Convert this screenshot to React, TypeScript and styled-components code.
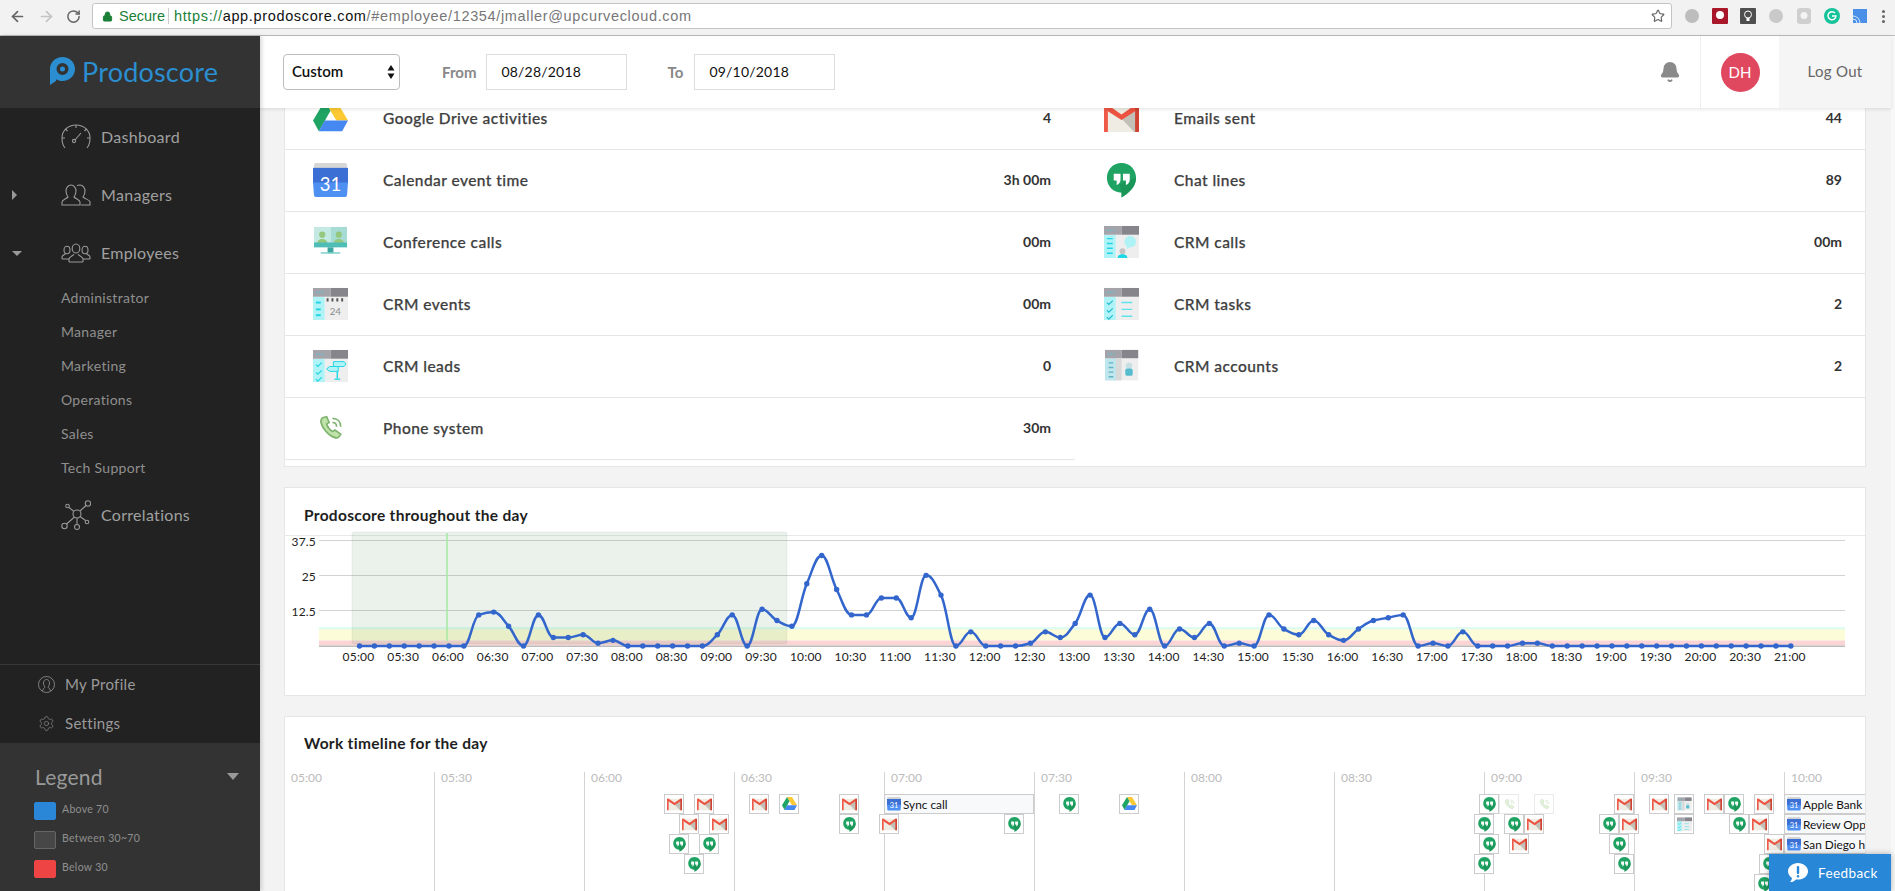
import React from 'react';
import styled, {createGlobalStyle} from 'styled-components';
import {ArrowLeft, ArrowRight, RotateCw, Lock, Star, Bell, Settings} from 'lucide-react';

const GlobalStyle = createGlobalStyle`
  html, body {
    margin: 0;
    height: 100%;
    overflow: hidden;
    background: #f3f3f3;
    font-family: Lato, "Noto Sans", sans-serif;
  }
  * { box-sizing: border-box; }
  #root { height: 100%; }
`;

type IconKind = 'drive' | 'gmail' | 'calendar' | 'chat' | 'conference' | 'events' | 'leads' | 'phone' | 'calls' | 'tasks' | 'accounts';

const CrmFrame = ({accent = '#b0f3f6', children}: {accent?: string, children?: React.ReactNode}) => (
    <>
        <rect x="0" y="10" width="36" height="24" fill="#eeeeee"/>
        <rect x="0" y="10" width="12" height="24" fill={accent}/>
        <rect x="0" y="1" width="18" height="9" fill="#a3a3a9"/>
        <rect x="18" y="1" width="18" height="9" fill="#85858b"/>
        <circle cx="4" cy="5.5" r=".8" fill="#55c8e0"/>
        <circle cx="7" cy="5.5" r=".8" fill="#55c8e0"/>
        <circle cx="10" cy="5.5" r=".8" fill="#55c8e0"/>
        {children}
    </>
);

const Glyph = ({kind, size = 35}: {kind: IconKind, size?: number}) => (
    <svg width={size} height={size} viewBox="0 0 36 36">
        {kind === 'drive' && <>
            <polygon points="12,0 24,0 36,20 24,20" fill="#fbc933"/>
            <polygon points="12,0 0,20 6,31 18,10" fill="#1fa463"/>
            <polygon points="6,31 30,31 36,20 12,20" fill="#4688f1"/>
        </>}
        {kind === 'gmail' && <>
            <rect x="0" y="4" width="36" height="28" rx="1" fill="#efece3"/>
            <polygon points="18,18 36,8 36,32 31,32" fill="#c3c1b7"/>
            <polygon points="0,4 4,4 18,14 32,4 36,4 36,8 18,19.500 0,8" fill="#ec5340"/>
            <rect x="0" y="4" width="4" height="28" rx="1" fill="#ef5a48"/>
            <rect x="32" y="4" width="4" height="28" rx="1" fill="#cf4332"/>
        </>}
        {kind === 'calendar' && <>
            <rect x="1" y="0" width="34" height="7" rx="2" fill="#d6d6d6"/>
            <rect x="0" y="5" width="36" height="16" fill="#3b6fd3"/>
            <path d="M0 20h36l-1 13a2 2 0 0 1-2 2H3a2 2 0 0 1-2-2z" fill="#4e8ff2"/>
            <text x="18" y="29" textAnchor="middle" fontFamily="Lato, sans-serif" fontSize="19" fill="#fff">31</text>
        </>}
        {kind === 'chat' && <>
            <path d="M18 0C9 0 3 7 3 15.5 3 24 10 30.500 18 30.500V35.500C26 31 33 24 33 15.500 33 7 27 0 18 0z" fill="#1ea362"/>
            <path d="M18 30.500V35.500C26 31 33 24 33 15.500L25 18 16 22z" fill="#178d54" opacity=".6"/>
            <path d="M10 11h7v6c0 3-1.500 5-4 5.500v-4.500h-3zM19.500 11h7v6c0 3-1.500 5-4 5.500v-4.500h-3z" fill="#fff"/>
        </>}
        {kind === 'conference' && <>
            <rect x="1" y="2" width="17" height="20" fill="#c4e9e2"/>
            <rect x="18" y="2" width="17" height="20" fill="#a6dcd3"/>
            <circle cx="9.500" cy="10" r="3.200" fill="#95c77e"/>
            <path d="M4 20c0-4 3-5.500 5.500-5.500s5.500 1.500 5.500 5.500z" fill="#95c77e"/>
            <circle cx="26.500" cy="10" r="3.200" fill="#95c77e"/>
            <path d="M21 20c0-4 3-5.500 5.500-5.500S32 16 32 20z" fill="#95c77e"/>
            <rect x="1" y="18" width="34" height="5" fill="#4dbdb6"/>
            <rect x="15" y="23" width="6" height="6" fill="#3da79f"/>
            <rect x="8" y="28" width="20" height="1.500" fill="#7bd0ca"/>
        </>}
        {kind === 'events' && <CrmFrame>
            <rect x="3" y="15" width="5" height="2" fill="#1fd6e4"/>
            <rect x="3" y="22" width="5" height="2" fill="#1fd6e4"/>
            <rect x="3" y="28" width="5" height="2" fill="#1fd6e4"/>
            <path d="M15 11.500v3.500M20 11.500v3.500M25 11.500v3.500M30 11.500v3.500" stroke="#555" strokeWidth="2"/>
            <text x="23" y="29" textAnchor="middle" fontFamily="Lato, sans-serif" fontSize="10" fill="#8a8a8a">24</text>
        </CrmFrame>}
        {kind === 'leads' && <CrmFrame>
            <path d="M3 16l2 2 4-4M3 24l2 2 4-4M3 31l2 2 4-4" stroke="#1fd6e4" strokeWidth="1.200" fill="none"/>
            <path d="M21 13h11l2 2.500-2 2.500H21z" fill="#b0f3f6" stroke="#1fd6e4"/>
            <path d="M26 18h-9l-3 2.500 3 2.500h9z" fill="#b0f3f6" stroke="#1fd6e4"/>
            <path d="M25 23v7M22 31h6" stroke="#1fd6e4" strokeWidth="1.500"/>
        </CrmFrame>}
        {kind === 'calls' && <CrmFrame>
            <path d="M3 14h6M3 19h6M3 24h6M3 29h6" stroke="#1fd6e4" strokeWidth="1.500"/>
            <circle cx="27" cy="17" r="6" fill="#b0f3f6"/>
            <path d="M24 21l-1 4 5-3z" fill="#b0f3f6"/>
            <circle cx="19" cy="27" r="3" fill="#c4c4c4"/>
            <path d="M14 34c0-3 2-4 5-4s5 1 5 4z" fill="#1fd6e4"/>
        </CrmFrame>}
        {kind === 'tasks' && <CrmFrame>
            <path d="M3 16l2 2 4-4M3 24l2 2 4-4M3 31l2 2 4-4" stroke="#1fb9d0" strokeWidth="1.200" fill="none"/>
            <path d="M18 16h11M18 23h11M18 30h11" stroke="#5fe3ec" strokeWidth="1.500"/>
        </CrmFrame>}
        {kind === 'accounts' && <g transform="translate(1 0) scale(.95)">
            <CrmFrame accent="#bfe6ec">
                <rect x="12" y="10" width="6" height="24" fill="#d9d9d9"/>
                <path d="M4 15h5M4 20h5M4 25h5M4 30h5" stroke="#5fb4c4" strokeWidth="1.500"/>
                <circle cx="26" cy="18" r="3.500" fill="#c8dfe4"/>
                <rect x="22" y="21" width="8" height="8" rx="2" fill="#55bccf"/>
            </CrmFrame>
        </g>}
        {kind === 'phone' && <g fill="none" stroke="#7fb36f" transform="translate(3 2.500) scale(.85)">
            <path d="M9 5c-2 1-3 3-3 5 1 7 9 17 16 19 3 1 5 1 6-1l2-3-7-5-3 2c-3-2-6-6-7-9l3-2-3-7z" fill="#bfe3a8" strokeWidth="2"/>
            <path d="M20 11c3 0 5 2 5 5M20 6c6 0 10 4 10 10" strokeWidth="2"/>
        </g>}
    </svg>
);

const LogoMark = () => (
    <svg width="25" height="28" viewBox="0 0 25 28">
        <path fillRule="evenodd" fill="#2a8ed0" d="M12.500 0C5.600 0 0 5.400 0 12v16l6-4v-1.800c1.900 1.100 4.100 1.800 6.500 1.800C19.400 24 25 18.600 25 12S19.400 0 12.500 0zm0 6a6 6 0 1 1 0 12 6 6 0 0 1 0-12zm0 3.500a2.500 2.500 0 1 0 0 5 2.500 2.500 0 0 0 0-5z"/>
    </svg>
);

const GaugeIcon = () => (
    <svg width="30" height="26" viewBox="0 0 30 26" fill="none" stroke="#999" strokeWidth="1.100">
        <path d="M4 24C1.500 21 1 18 1 14 1 6.500 7 1 15 1s14 5.500 14 13c0 4-.5 7-3 10"/>
        <path d="M15 1v3M4.500 5l2 2M25.500 5l-2 2M1 14h3M29 14h-3"/>
        <circle cx="13" cy="17" r="1.600"/>
        <path d="M14 16l6-7"/>
    </svg>
);

const ManagersIcon = () => (
    <svg width="30" height="22" viewBox="0 0 30 22" fill="none" stroke="#999" strokeWidth="1.100">
        <path d="M1 21v-3c0-2 4-3 6-5-1.500-2-2-4-2-6 0-3 2-6 5-6s5 3 5 6c0 2-.5 4-2 6 2 2 6 3 6 5v3z"/>
        <path d="M16 1.500c1-.5 2-.5 3-.5 3 0 5 3 5 6 0 2-.5 4-2 6 2 2 7 3 7 5v3h-9"/>
    </svg>
);

const EmployeesIcon = () => (
    <svg width="30" height="20" viewBox="0 0 30 20" fill="none" stroke="#999" strokeWidth="1.100">
        <ellipse cx="15" cy="5.500" rx="3.800" ry="4.500"/>
        <path d="M8 19v-3c0-2 3-3 5-4.500M22 19v-3c0-2-3-3-5-4.500M8 19h14"/>
        <ellipse cx="6" cy="7" rx="3" ry="3.800"/>
        <path d="M1 16v-2c0-1.500 2-2 3.500-3.200M8 16H1"/>
        <ellipse cx="24" cy="7" rx="3" ry="3.800"/>
        <path d="M29 16v-2c0-1.500-2-2-3.500-3.200M22 16h7"/>
    </svg>
);

const HubIcon = () => (
    <svg width="30" height="30" viewBox="0 0 30 30" fill="none" stroke="#999" strokeWidth="1.100">
        <circle cx="16" cy="14" r="4"/>
        <circle cx="27" cy="3.500" r="2.700"/>
        <circle cx="6.500" cy="6" r="1.800"/>
        <circle cx="3.500" cy="26" r="2.700"/>
        <circle cx="16" cy="27" r="2.500"/>
        <circle cx="26" cy="22" r="1.800"/>
        <path d="M19 11l6-5.500M13 11.500L8 7.500M13.500 17L5.500 24M16 18v6.500M19 16.500l5.500 4"/>
    </svg>
);

const ProfileIcon = () => (
    <svg width="17" height="17" viewBox="0 0 17 17" fill="none" stroke="#8a8a8a" strokeWidth=".9">
        <circle cx="8.500" cy="8.500" r="8"/>
        <path d="M4.500 15l1-2.500c1-.5 1.500-1 1.500-1.500-1-1-1.500-2.500-1.500-4 0-2 1-3.500 3-3.500s3 1.500 3 3.500c0 1.500-.5 3-1.500 4 0 .5.5 1 1.500 1.500l1 2.500"/>
    </svg>
);

const FeedbackIcon = () => (
    <svg width="20" height="19" viewBox="0 0 20 19">
        <path d="M10 0c5.500 0 10 3.700 10 8.300s-4.500 8.300-10 8.300c-.7 0-1.300 0-2-.2C6.500 18 4.500 19 2 19c1-1 1.800-2.300 2-4C1.600 13.500 0 11 0 8.300 0 3.700 4.500 0 10 0z" fill="#fff"/>
        <rect x="8.800" y="3" width="2.400" height="8" rx="1" fill="#2887d6"/>
        <rect x="8.800" y="12" width="2.400" height="2.400" rx="1.200" fill="#2887d6"/>
    </svg>
);

const extensions = [
    <circle key="a" cx="8" cy="8" r="7" fill="#bdbdbd"/>,
    <g key="b"><rect x="0" y="0" width="16" height="16" rx="1" fill="#a8182a"/><circle cx="8" cy="7" r="4" fill="#fff"/></g>,
    <g key="c"><rect x="0" y="0" width="16" height="16" rx="1" fill="#4f4f4f"/><circle cx="8" cy="6.500" r="3.500" fill="none" stroke="#fff"/><rect x="6.500" y="10" width="3" height="3" fill="#fff"/></g>,
    <circle key="d" cx="8" cy="8" r="7" fill="#c9c9c9"/>,
    <g key="e"><rect x="1" y="0" width="14" height="16" rx="3" fill="#cfcfcf"/><circle cx="8" cy="7.500" r="3.500" fill="#f3f3f3"/></g>,
    <g key="f"><circle cx="8" cy="8" r="8" fill="#15c39a"/><path d="M11 5a4 4 0 1 0 1 3H8" fill="none" stroke="#fff" strokeWidth="1.500"/></g>,
    <g key="g"><rect x="1" y="1" width="14" height="14" fill="#4a90e8"/><path d="M1 8a7 7 0 0 1 7 7M1 11a4 4 0 0 1 4 4" fill="none" stroke="#d8eaff"/></g>,
];

const BrowserChrome = () => (
    <Chrome>
        <NavButtons>
            <ArrowLeft size={17} color="#666" strokeWidth={2.4}/>
            <ArrowRight size={17} color="#c4c4c4" strokeWidth={2.4}/>
            <RotateCw size={15} color="#666" strokeWidth={2.4}/>
        </NavButtons>
        <AddressBar>
            <Lock size={11} color="#1a7f37" fill="#1a7f37"/>
            <Secure>Secure</Secure>
            <Url>
                <UrlScheme>https://</UrlScheme>
                <UrlHost>app.prodoscore.com</UrlHost>
                /#employee/12354/jmaller@upcurvecloud.com
            </Url>
            <StarSlot><Star size={14} color="#666" strokeWidth={2}/></StarSlot>
        </AddressBar>
        <Extensions>
            {extensions.map((e, i) => <svg key={i} width="16" height="16" viewBox="0 0 16 16">{e}</svg>)}
            <Kebab/>
        </Extensions>
    </Chrome>
);

const subItems = ['Administrator', 'Manager', 'Marketing', 'Operations', 'Sales', 'Tech Support'];

const Sidebar = () => (
    <Side>
        <LogoBar>
            <LogoMark/>
            <LogoText>Prodoscore</LogoText>
        </LogoBar>
        <NavItem><CaretSlot/><IconSlot><GaugeIcon/></IconSlot><NavLabel>Dashboard</NavLabel></NavItem>
        <NavItem><CaretSlot><CaretRight/></CaretSlot><IconSlot><ManagersIcon/></IconSlot><NavLabel>Managers</NavLabel></NavItem>
        <NavItem><CaretSlot><CaretDown/></CaretSlot><IconSlot><EmployeesIcon/></IconSlot><NavLabel>Employees</NavLabel></NavItem>
        <SubList>
            {subItems.map(s => <SubItem key={s}>{s}</SubItem>)}
        </SubList>
        <NavItem><CaretSlot/><IconSlot><HubIcon/></IconSlot><NavLabel>Correlations</NavLabel></NavItem>
        <ProfileBlock>
            <ProfileRow><ProfileIcon/><NavLabel>My Profile</NavLabel></ProfileRow>
            <ProfileRow><Settings size={17} color="#8a8a8a" strokeWidth={1}/><NavLabel>Settings</NavLabel></ProfileRow>
        </ProfileBlock>
        <Legend>
            <LegendHead>Legend<LegendCaret/></LegendHead>
            <LegendRow><Swatch $color="#2a87d8"/>Above 70</LegendRow>
            <LegendRow><Swatch $color="#474747" $bordered/>Between 30~70</LegendRow>
            <LegendRow><Swatch $color="#ee4444"/>Below 30</LegendRow>
        </Legend>
    </Side>
);

const TopHeader = () => (
    <Header>
        <SelectBox>
            <Select defaultValue="Custom">
                <option>Custom</option>
            </Select>
            <SelectArrows viewBox="0 0 8 14" width="8" height="14">
                <path d="M4 0l3.500 5.500h-7zM4 14L.5 8.500h7z" fill="#111"/>
            </SelectArrows>
        </SelectBox>
        <DateLabel $gap={42}>From</DateLabel>
        <DateInput defaultValue="08/28/2018"/>
        <DateLabel $gap={40}>To</DateLabel>
        <DateInput defaultValue="09/10/2018"/>
        <BellSlot><Bell size={22} color="#8a8a8a" fill="#8a8a8a"/></BellSlot>
        <AvatarSlot><Avatar>DH</Avatar></AvatarSlot>
        <LogOut>Log Out</LogOut>
    </Header>
);

const activities: {kind: IconKind, label: string, value: string}[][] = [
    [{kind: 'drive', label: 'Google Drive activities', value: '4'}, {kind: 'gmail', label: 'Emails sent', value: '44'}],
    [{kind: 'calendar', label: 'Calendar event time', value: '3h 00m'}, {kind: 'chat', label: 'Chat lines', value: '89'}],
    [{kind: 'conference', label: 'Conference calls', value: '00m'}, {kind: 'calls', label: 'CRM calls', value: '00m'}],
    [{kind: 'events', label: 'CRM events', value: '00m'}, {kind: 'tasks', label: 'CRM tasks', value: '2'}],
    [{kind: 'leads', label: 'CRM leads', value: '0'}, {kind: 'accounts', label: 'CRM accounts', value: '2'}],
    [{kind: 'phone', label: 'Phone system', value: '30m'}],
];

const ActivityCard = () => (
    <ScrolledCard>
        <ActivityGrid>
            {activities.map(row => row.map(a => (
                <ActivityRow key={a.label}>
                    <ActivityIcon><Glyph kind={a.kind}/></ActivityIcon>
                    <ActivityLabel>{a.label}</ActivityLabel>
                    <ActivityValue>{a.value}</ActivityValue>
                </ActivityRow>
            )))}
        </ActivityGrid>
    </ScrolledCard>
);

// one value every 10 minutes, 05:00 to 21:00
const scores = [
    0, 0, 0, 0, 0, 0, 0, 0, 11, 12, 7, 0, 11, 3, 3, 4, 1, 2, 0, 0, 0, 0, 0, 0, 4, 11, 0, 13, 9, 7, 22, 32, 20,
    11, 11, 17, 17, 10, 25, 18, 0, 5, 0, 0, 0, 1, 5, 3, 8, 18, 3, 8, 4, 13, 0, 6, 3, 8, 0, 1, 0, 11, 6, 4, 9, 4, 2, 6, 9, 10,
    11, 0, 1, 0, 5, 0, 0, 0, 1, 1, 0, 0, 0, 0, 0, 0, 0, 0, 0, 0, 0, 0, 0, 0, 0, 0, 0,
];

const CH_LEFT = 34;
const CH_RIGHT = 1560;
const BASE_Y = 110;
const pointX = (i: number) => 74.5 + i * 14.91;
const pointY = (v: number) => BASE_Y - v * 2.827;

// monotone cubic, flat at every peak and dip
const buildCurve = () => {
    const pts = scores.map((v, i) => [pointX(i), pointY(v)]);
    const dx = 14.91;
    const slope = (i: number) => (pts[i + 1][1] - pts[i][1]) / dx;
    const tangents = pts.map((_, i) => {
        if (i === 0) return slope(0);
        if (i === pts.length - 1) return slope(i - 1);
        const a = slope(i - 1);
        const b = slope(i);
        return a * b <= 0 ? 0 : 2 * a * b / (a + b);
    });
    let d = `M${pts[0][0]} ${pts[0][1]}`;
    for (let i = 0; i < pts.length - 1; i++) {
        const c1y = pts[i][1] + tangents[i] * dx * 0.4;
        const c2y = pts[i + 1][1] - tangents[i + 1] * dx * 0.4;
        d += `C${pts[i][0] + dx * 0.4} ${c1y} ${pts[i + 1][0] - dx * 0.4} ${c2y} ${pts[i + 1][0]} ${pts[i + 1][1]}`;
    }
    return d;
};

const hourLabels = Array.from({length: 33}, (_, i) => {
    const h = 5 + Math.floor(i / 2);
    return `${h < 10 ? '0' : ''}${h}:${i % 2 ? '30' : '00'}`;
});

const ScoreChart = () => (
    <ChartSvg width="1580" height="159" viewBox="0 0 1580 159">
        <rect x={CH_LEFT} y="91" width={CH_RIGHT - CH_LEFT} height="3" fill="#e0fbef"/>
        <rect x={CH_LEFT} y="93.500" width={CH_RIGHT - CH_LEFT} height="11" fill="#fdfcd8"/>
        <rect x={CH_LEFT} y="104.500" width={CH_RIGHT - CH_LEFT} height="5" fill="#fbd5d5"/>
        <rect x={CH_LEFT} y="109.500" width={CH_RIGHT - CH_LEFT} height="1.500" fill="#bbb"/>
        {[4.5, 39.5, 74.5].map(y => <line key={y} x1={CH_LEFT} x2={CH_RIGHT} y1={y} y2={y} stroke="#d2d2d2" strokeWidth="1"/>)}
        <rect x="67" y="-4" width="435" height="112" rx="2" fill="rgba(60,140,70,.11)" stroke="rgba(0,0,0,.05)"/>
        <line x1="162" x2="162" y1="-3" y2="105" stroke="#a4e8a0" strokeWidth="1.500"/>
        <ChartText x="31" y="10" textAnchor="end">37.5</ChartText>
        <ChartText x="31" y="45" textAnchor="end">25</ChartText>
        <ChartText x="31" y="80" textAnchor="end">12.5</ChartText>
        <path d={buildCurve()} fill="none" stroke="#3366cc" strokeWidth="2.500"/>
        {scores.map((v, i) => <circle key={i} cx={pointX(i)} cy={pointY(v)} r="2.700" fill="#3366cc"/>)}
        {hourLabels.map((l, i) => <ChartText key={l} x={pointX(i * 3) - 1} y="125" textAnchor="middle">{l}</ChartText>)}
    </ChartSvg>
);

const ticks = ['05:00', '05:30', '06:00', '06:30', '07:00', '07:30', '08:00', '08:30', '09:00', '09:30', '10:00'];

// left is the distance from the first tick, row the lane under the tick labels
const marks: {kind: IconKind, left: number, row: number, faded?: boolean}[] = [
    {kind: 'gmail', left: 380, row: 0}, {kind: 'gmail', left: 410, row: 0}, {kind: 'gmail', left: 465, row: 0},
    {kind: 'drive', left: 495, row: 0}, {kind: 'gmail', left: 555, row: 0}, {kind: 'chat', left: 775, row: 0},
    {kind: 'drive', left: 835, row: 0}, {kind: 'chat', left: 1195, row: 0}, {kind: 'phone', left: 1215, row: 0, faded: true},
    {kind: 'phone', left: 1250, row: 0, faded: true}, {kind: 'gmail', left: 1330, row: 0}, {kind: 'gmail', left: 1365, row: 0},
    {kind: 'accounts', left: 1390, row: 0}, {kind: 'gmail', left: 1420, row: 0}, {kind: 'chat', left: 1440, row: 0},
    {kind: 'gmail', left: 1470, row: 0},
    {kind: 'gmail', left: 395, row: 1}, {kind: 'gmail', left: 425, row: 1}, {kind: 'chat', left: 555, row: 1},
    {kind: 'gmail', left: 595, row: 1}, {kind: 'chat', left: 720, row: 1}, {kind: 'chat', left: 1190, row: 1},
    {kind: 'chat', left: 1220, row: 1}, {kind: 'gmail', left: 1240, row: 1}, {kind: 'chat', left: 1315, row: 1},
    {kind: 'gmail', left: 1335, row: 1}, {kind: 'tasks', left: 1390, row: 1}, {kind: 'chat', left: 1445, row: 1},
    {kind: 'gmail', left: 1465, row: 1},
    {kind: 'chat', left: 385, row: 2}, {kind: 'chat', left: 415, row: 2}, {kind: 'chat', left: 1195, row: 2},
    {kind: 'gmail', left: 1225, row: 2}, {kind: 'chat', left: 1325, row: 2}, {kind: 'gmail', left: 1480, row: 2},
    {kind: 'chat', left: 400, row: 3}, {kind: 'chat', left: 1190, row: 3}, {kind: 'chat', left: 1330, row: 3},
    {kind: 'chat', left: 1475, row: 3}, {kind: 'chat', left: 1470, row: 4},
];

const meetings = [
    {label: 'Sync call', left: 600, row: 0},
    {label: 'Apple Bank', left: 1500, row: 0},
    {label: 'Review Opp', left: 1500, row: 1},
    {label: 'San Diego h', left: 1500, row: 2},
];

const Timeline = () => (
    <TimelineArea>
        {ticks.map(t => <Tick key={t}>{t}</Tick>)}
        {marks.map((m, i) => (
            <Mark key={i} $left={m.left} $row={m.row} $faded={m.faded}>
                <Glyph kind={m.kind} size={15}/>
            </Mark>
        ))}
        {meetings.map(m => (
            <Meeting key={m.label} $left={m.left} $row={m.row}>
                <Glyph kind="calendar" size={14}/>
                <MeetingText>{m.label}</MeetingText>
            </Meeting>
        ))}
    </TimelineArea>
);

function App () {
    return (
        <Page>
            <GlobalStyle/>
            <BrowserChrome/>
            <Body>
                <Sidebar/>
                <Main>
                    <TopHeader/>
                    <Content>
                        <ActivityCard/>
                        <ChartCard>
                            <CardTitle>Prodoscore throughout the day</CardTitle>
                            <ScoreChart/>
                        </ChartCard>
                        <TimelineCard>
                            <TimelineTitle>Work timeline for the day</TimelineTitle>
                            <Timeline/>
                        </TimelineCard>
                    </Content>
                </Main>
                <ScrollStrip/>
            </Body>
            <Feedback><FeedbackIcon/>Feedback</Feedback>
        </Page>
    )
}

const Page = styled.div`
  height: 100%;
  display: flex;
  flex-direction: column;
`;
const Chrome = styled.div`
  height: 36px;
  flex: none;
  display: flex;
  align-items: center;
  padding-bottom: 3px;
  background: #f2f2f2;
  border-bottom: 1px solid #bdbdbd;
`;
const NavButtons = styled.div`
  width: 92px;
  flex: none;
  display: flex;
  align-items: center;
  justify-content: space-between;
  padding: 0 11px 0 9px;
`;
const AddressBar = styled.div`
  width: 1580px;
  height: 26px;
  flex: none;
  display: flex;
  align-items: center;
  padding: 0 6px 0 9px;
  background: #fff;
  border: 1px solid #c4c4c4;
  border-radius: 3px;
`;
const Secure = styled.span`
  margin-left: 6px;
  padding-right: 3px;
  border-right: 1px solid #ccc;
  font: 14.5px "Liberation Sans", sans-serif;
  color: #1a7f37;
`;
const Url = styled.span`
  margin-left: 5px;
  font: 14.5px "Liberation Sans", sans-serif;
  letter-spacing: .65px;
  color: #777;
`;
const UrlScheme = styled.span`
  color: #1a7f37;
`;
const UrlHost = styled.span`
  color: #111;
`;
const StarSlot = styled.span`
  margin-left: auto;
  margin-right: 0;
  display: flex;
`;
const Extensions = styled.div`
  flex: 1;
  display: flex;
  align-items: center;
  gap: 12px;
  padding-left: 12px;
`;
const Kebab = styled.span`
  width: 3px;
  height: 3px;
  margin-left: 2px;
  border-radius: 50%;
  background: #666;
  box-shadow: 0 -5px 0 #666, 0 5px 0 #666;
`;
const Body = styled.div`
  flex: 1;
  min-height: 0;
  display: flex;
`;
const Side = styled.aside`
  width: 260px;
  flex: none;
  display: flex;
  flex-direction: column;
  background: #222;
  color: #999;
  box-shadow: 2px 0 4px rgba(0,0,0,.15);
  z-index: 3;
`;
const LogoBar = styled.div`
  height: 72px;
  flex: none;
  display: flex;
  align-items: center;
  gap: 7px;
  padding: 0 0 2px 50px;
  background: #333;
`;
const LogoText = styled.span`
  font-size: 27px;
  letter-spacing: .2px;
  color: #2a8ed0;
`;
const NavItem = styled.div`
  height: 58px;
  flex: none;
  display: flex;
  align-items: center;
  font-size: 16px;
  letter-spacing: .3px;
  color: #a0a0a0;
`;
const NavLabel = styled.span`
  padding-bottom: 2px;
`;
const CaretSlot = styled.span`
  width: 61px;
  flex: none;
  display: flex;
  padding-left: 12px;
`;
const CaretRight = styled.span`
  border-left: 5px solid #999;
  border-top: 5px solid transparent;
  border-bottom: 5px solid transparent;
`;
const CaretDown = styled.span`
  border-top: 5px solid #999;
  border-left: 5px solid transparent;
  border-right: 5px solid transparent;
`;
const IconSlot = styled.span`
  width: 40px;
  flex: none;
  display: flex;
`;
const SubList = styled.div`
  margin-top: -1px;
  margin-bottom: 1px;
`;
const SubItem = styled.div`
  height: 34px;
  display: flex;
  align-items: center;
  padding: 0 0 2px 61px;
  font-size: 14px;
  letter-spacing: .3px;
  color: #8f8f8f;
`;
const ProfileBlock = styled.div`
  margin-top: auto;
  border-top: 1px solid #383838;
`;
const ProfileRow = styled.div`
  height: 39px;
  display: flex;
  align-items: center;
  gap: 10px;
  padding-left: 38px;
  font-size: 15px;
  letter-spacing: .3px;
  color: #9a9a9a;
`;
const Legend = styled.div`
  height: 148px;
  flex: none;
  padding: 20px 21px 0 35px;
  background: #333;
  font-size: 10.500px;
  letter-spacing: .3px;
  color: #8f8f8f;
`;
const LegendHead = styled.div`
  height: 26px;
  margin-bottom: 13px;
  display: flex;
  align-items: center;
  justify-content: space-between;
  font-size: 21px;
  letter-spacing: .2px;
  color: #999;
`;
const LegendCaret = styled.span`
  border-top: 7px solid #999;
  border-left: 6px solid transparent;
  border-right: 6px solid transparent;
`;
const LegendRow = styled.div`
  height: 29px;
  display: flex;
  align-items: flex-start;
  gap: 6px;
  line-height: 14px;
`;
const Swatch = styled.span<{$color: string, $bordered?: boolean}>`
  width: 22px;
  height: 18px;
  margin-left: -1px;
  border-radius: 2px;
  background: ${p => p.$color};
  border: 1px solid ${p => p.$bordered ? '#666' : p.$color};
`;
const Main = styled.main`
  flex: 1;
  min-width: 0;
  display: flex;
  flex-direction: column;
`;
const Header = styled.header`
  height: 72px;
  flex: none;
  display: flex;
  align-items: center;
  padding-left: 23px;
  background: #fff;
  box-shadow: 0 1px 4px rgba(0,0,0,.12);
  position: relative;
  z-index: 2;
`;
const SelectBox = styled.div`
  width: 117px;
  height: 36px;
  position: relative;
`;
const Select = styled.select`
  width: 100%;
  height: 100%;
  padding: 0 0 2px 8px;
  appearance: none;
  background: #fff;
  border: 1px solid #bdbdbd;
  border-radius: 4px;
  font: 600 15px Lato, sans-serif;
  color: #111;
`;
const SelectArrows = styled.svg`
  position: absolute;
  right: 5px;
  top: 11px;
`;
const DateLabel = styled.span<{$gap: number}>`
  margin-left: ${p => p.$gap}px;
  margin-right: 10px;
  min-width: 17px;
  font-size: 15px;
  font-weight: 700;
  color: #888;
`;
const DateInput = styled.input`
  width: 141px;
  height: 36px;
  padding: 0 14px 2px;
  border: 1px solid #dcdcdc;
  font: 14px Lato, sans-serif;
  letter-spacing: .2px;
  color: #111;
`;
const BellSlot = styled.div`
  margin-left: auto;
  width: 41px;
  display: flex;
`;
const AvatarSlot = styled.div`
  width: 79px;
  height: 100%;
  display: flex;
  align-items: center;
  justify-content: center;
  border-left: 1px solid #eee;
`;
const Avatar = styled.div`
  width: 39px;
  height: 39px;
  display: flex;
  align-items: center;
  justify-content: center;
  border-radius: 50%;
  background: #e0485f;
  font-size: 15px;
  color: #fff;
`;
const LogOut = styled.div`
  width: 112px;
  height: 100%;
  display: flex;
  align-items: center;
  justify-content: center;
  padding-bottom: 3px;
  background: #f5f5f5;
  font-size: 15px;
  letter-spacing: .3px;
  color: #666;
`;
const Content = styled.div`
  flex: 1;
  min-height: 0;
  overflow: hidden;
  padding: 0 25px 0 24px;
`;
const Card = styled.section`
  background: #fff;
  border: 1px solid #e6e6e6;
`;
// the list is already scrolled a little under the header
const ScrolledCard = styled(Card)`
  margin-top: -21px;
  padding-bottom: 6px;
`;
const ActivityGrid = styled.div`
  display: grid;
  grid-template-columns: 790px 1fr;
`;
const ActivityRow = styled.div`
  height: 62px;
  display: flex;
  align-items: center;
  padding-left: 28px;
  border-bottom: 1px solid #e6e6e6;
  &:nth-child(even) { padding-left: 29px; padding-right: 23px; }
  &:nth-child(odd) { padding-right: 24px; }
`;
const ActivityIcon = styled.span`
  width: 35px;
  height: 35px;
  flex: none;
`;
const ActivityLabel = styled.span`
  margin-left: 35px;
  padding-bottom: 2px;
  flex: 1;
  font-size: 15.500px;
  font-weight: 500;
  letter-spacing: .45px;
  color: #3f3f3f;
  -webkit-text-stroke: .25px #3f3f3f;
`;
const ActivityValue = styled.span`
  padding-bottom: 2px;
  font-size: 14px;
  font-weight: 700;
  color: #333;
`;
const ChartCard = styled(Card)`
  height: 209px;
  margin-top: 20px;
`;
const CardTitle = styled.h3`
  height: 48px;
  margin: 0;
  padding: 19px 0 0 19px;
  border-bottom: 1px solid #e8e8e8;
  font-size: 15.500px;
  line-height: 17px;
  font-weight: 700;
  letter-spacing: .3px;
  color: #1e1e1e;
`;
const ChartSvg = styled.svg`
  display: block;
  overflow: visible;
`;
const ChartText = styled.text`
  font: 12px Lato, sans-serif;
  letter-spacing: .2px;
  fill: #222;
`;
const TimelineCard = styled(Card)`
  height: 260px;
  margin-top: 20px;
  overflow: hidden;
`;
const TimelineTitle = styled(CardTitle)`
  height: 55px;
  padding-top: 18px;
  border-bottom: none;
`;
const TimelineArea = styled.div`
  height: 200px;
  margin-left: -1px;
  position: relative;
  display: flex;
`;
const Tick = styled.div`
  width: 150px;
  flex: none;
  padding: 0 0 0 6px;
  border-left: 1px solid #d4d4d4;
  font-size: 12px;
  line-height: 12px;
  color: #bbb;
`;
const laneTop = (row: number) => 22 + row * 20;
const Mark = styled.div<{$left: number, $row: number, $faded?: boolean}>`
  position: absolute;
  left: ${p => p.$left}px;
  top: ${p => laneTop(p.$row)}px;
  width: 20px;
  height: 20px;
  display: flex;
  align-items: center;
  justify-content: center;
  background: #fff;
  border: 1px solid #ccc;
  opacity: ${p => p.$faded ? .4 : 1};
`;
const Meeting = styled.div<{$left: number, $row: number}>`
  position: absolute;
  left: ${p => p.$left}px;
  top: ${p => laneTop(p.$row)}px;
  width: 150px;
  height: 20px;
  display: flex;
  align-items: center;
  gap: 2px;
  padding-left: 2px;
  background: #f8f9fb;
  border: 1px solid #ccc;
`;
const MeetingText = styled.span`
  font-size: 11.800px;
  white-space: nowrap;
  color: #111;
`;
const ScrollStrip = styled.div`
  width: 4px;
  flex: none;
  background: #f8f8f8;
`;
const Feedback = styled.div`
  position: absolute;
  right: 4px;
  bottom: 0;
  width: 122px;
  height: 37px;
  display: flex;
  align-items: center;
  gap: 10px;
  padding-left: 19px;
  background: #2887d6;
  box-shadow: 0 0 6px rgba(0,0,0,.3);
  z-index: 5;
  font-size: 13.500px;
  letter-spacing: .4px;
  color: #fff;
`;

export default App;
